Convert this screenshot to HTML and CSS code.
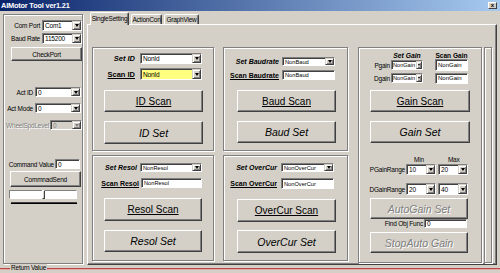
FILE: index.html
```html
<!DOCTYPE html>
<html>
<head>
<meta charset="utf-8">
<title>AIMotor Tool</title>
<link rel="stylesheet" href="styles.css">
</head>
<body>
<div class="window">
  <div class="titlebar">
    <span class="title">AIMotor Tool ver1.21</span>
    <span class="close">x</span>
  </div>
  <div class="main">
    <div class="leftpanel">
      <div class="lp-row lp-com"><span class="lbl">Com Port</span><div class="field combo c40"><span class="val">Com1</span><span class="dd"></span></div></div>
      <div class="lp-row lp-baud"><span class="lbl">Baud Rate</span><div class="field combo c40"><span class="val">115200</span><span class="dd"></span></div></div>
      <div class="btn checkport">CheckPort</div>
      <div class="lp-row lp-actid"><span class="lbl">Act ID</span><div class="field combo c46"><span class="val">0</span><span class="dd"></span></div></div>
      <div class="lp-row lp-actmode"><span class="lbl">Act Mode</span><div class="field combo c46"><span class="val">0</span><span class="dd"></span></div></div>
      <div class="lp-row lp-wheel"><span class="lbl disabled">WheelSpdLevel</span><div class="field combo c32 dis"><span class="val">0</span><span class="dd"></span></div></div>
      <div class="lp-row lp-cmd"><span class="lbl">Command Value</span><div class="field c25"><span class="val">0</span></div></div>
      <div class="btn cmdsend">CommnadSend</div>
      <div class="track">
        <div class="track-boxes"><div class="tbox tb1"></div><div class="thumb"></div><div class="tbox tb2"></div></div>
        <div class="track-line"></div>
      </div>
    </div>
    <div class="tabctl">
      <div class="tabs">
        <div class="tab sel">SingleSetting</div>
        <div class="tab t2">ActionCon</div>
        <div class="tab t3">GraphView</div>
      </div>
      <div class="tabpage">
        <div class="col col1">
          <div class="grp g-id">
            <div class="frow r1"><span class="flbl blabel it big">Set ID</span><div class="field combo"><span class="val">NonId</span><span class="dd"></span></div></div>
            <div class="frow r2"><span class="flbl blabel ul big">Scan ID</span><div class="field combo yellow"><span class="val">NonId</span><span class="dd"></span></div></div>
            <div class="btn bigbtn b1"><span class="ul">ID Scan</span></div>
            <div class="btn bigbtn b2"><span class="it">ID Set</span></div>
          </div>
          <div class="grp g-resol">
            <div class="frow r1"><span class="flbl blabel it">Set Resol</span><div class="field combo small"><span class="val">NonResol</span><span class="dd"></span></div></div>
            <div class="frow r2"><span class="flbl blabel ul">Scan Resol</span><div class="field small"><span class="val">NonResol</span></div></div>
            <div class="btn bigbtn b1"><span class="ul">Resol Scan</span></div>
            <div class="btn bigbtn b2"><span class="it">Resol Set</span></div>
          </div>
        </div>
        <div class="col col2">
          <div class="grp g-baud">
            <div class="frow r1"><span class="flbl blabel it">Set Baudrate</span><div class="field combo small"><span class="val">NonBaud</span><span class="dd"></span></div></div>
            <div class="frow r2"><span class="flbl blabel ul">Scan Baudrate</span><div class="field small"><span class="val">NonBaud</span></div></div>
            <div class="btn bigbtn b1"><span class="ul">Baud Scan</span></div>
            <div class="btn bigbtn b2"><span class="it">Baud Set</span></div>
          </div>
          <div class="grp g-oc">
            <div class="frow r1"><span class="flbl blabel it">Set OverCur</span><div class="field combo small"><span class="val">NonOverCur</span><span class="dd"></span></div></div>
            <div class="frow r2"><span class="flbl blabel ul">Scan OverCur</span><div class="field small"><span class="val">NonOverCur</span></div></div>
            <div class="btn bigbtn b1"><span class="ul">OverCur Scan</span></div>
            <div class="btn bigbtn b2"><span class="it">OverCur Set</span></div>
          </div>
        </div>
        <div class="grp g-gain">
          <div class="ghead"><span class="blabel it gh1">Set Gain</span><span class="blabel ul gh2">Scan Gain</span></div>
          <div class="frow grow1"><span class="flbl">Pgain</span><div class="field combo gc"><span class="val">NonGain</span><span class="dd"></span></div><div class="field gt"><span class="val">NonGain</span></div></div>
          <div class="frow grow2"><span class="flbl">Dgain</span><div class="field combo gc"><span class="val">NonGain</span><span class="dd"></span></div><div class="field gt"><span class="val">NonGain</span></div></div>
          <div class="btn bigbtn b1"><span class="ul">Gain Scan</span></div>
          <div class="btn bigbtn b2"><span class="it">Gain Set</span></div>
          <div class="minmax"><span class="mn">Min</span><span class="mx">Max</span></div>
          <div class="frow rng1"><span class="flbl">PGainRange</span><div class="field combo rc"><span class="val">10</span><span class="dd"></span></div><div class="field combo rc"><span class="val">20</span><span class="dd"></span></div></div>
          <div class="frow rng2"><span class="flbl">DGainRange</span><div class="field combo rc"><span class="val">20</span><span class="dd"></span></div><div class="field combo rc"><span class="val">40</span><span class="dd"></span></div></div>
          <div class="btn bigbtn b3 dbtn"><span class="it">AutoGain Set</span></div>
          <div class="frow frow-find"><span class="flbl">Find Obj Func</span><div class="field ft"><span class="val">0</span></div></div>
          <div class="btn bigbtn b4 dbtn"><span class="it">StopAuto Gain</span></div>
        </div>
        <div class="grp strip"></div>
      </div>
    </div>
  </div>
  <div class="retval"><span class="rv-label">Return Value</span></div>
</div>
</body>
</html>
```

FILE: styles.css
```css
* { box-sizing: border-box; margin: 0; padding: 0; }
body {
  margin: 0;
  background: #d4d0c8;
  font-family: "Liberation Sans", Arial, sans-serif;
  font-size: 6.5px;
  letter-spacing: -0.2px;
  color: #000;
}
.window { width: 500px; height: 273px; overflow: hidden; background: #d4d0c8; }

/* title bar */
.titlebar {
  height: 11px;
  background: linear-gradient(to right, #0a246a, #a6caf0);
  display: flex; align-items: center; justify-content: space-between;
  padding: 0 3px 0 1px;
}
.title { color: #fff; font-weight: bold; font-size: 7.4px; letter-spacing: -0.2px; line-height: 11px; }
.close {
  width: 9px; height: 7px; background: #d4d0c8;
  border: 1px solid; border-color: #fff #404040 #404040 #fff;
  font: bold 6px/4px "Liberation Sans", Arial, sans-serif; letter-spacing: 0; text-align: center;
}

.main { display: flex; height: 254px; }

/* generic widgets */
.btn {
  background: #d4d0c8;
  border: 1px solid; border-color: #fff #404040 #404040 #fff;
  box-shadow: inset -1px -1px #808080;
  display: flex; align-items: center; justify-content: center;
  white-space: nowrap;
}
.field {
  background: #fff;
  border: 1px solid; border-color: #808080 #fff #fff #808080;
  box-shadow: inset 1px 1px #404040;
  display: flex; align-items: stretch;
  height: 100%;
}
.field .val { flex: 1; display: flex; align-items: center; padding-left: 2px; white-space: nowrap; overflow: hidden; }
.dd {
  width: 9px; flex: none;
  background: #d4d0c8;
  border: 1px solid; border-color: #d4d0c8 #404040 #404040 #d4d0c8;
  box-shadow: inset 1px 1px #fff, inset -1px -1px #808080;
  display: flex; align-items: center; justify-content: center;
}
.dd::after {
  content: ""; width: 0; height: 0;
  border-left: 2px solid transparent; border-right: 2px solid transparent;
  border-top: 3px solid #000;
}
.yellow { background: #ffff80; }
.dis { background: #d4d0c8; color: #808080; }
.dis .dd::after { border-top-color: #808080; }
.disabled { color: #808080; text-shadow: 1px 1px #fff; }

.grp {
  border: 1px solid #808080;
  box-shadow: inset 1px 1px #fff, 1px 1px #fff;
  display: flex; flex-direction: column;
}

/* left panel */
.leftpanel {
  margin: 3px 0 0 3px; width: 80px; height: 250px;
  border: 1px solid #808080;
  box-shadow: inset 1px 1px #fff, 1px 1px #fff;
  display: flex; flex-direction: column;
}
.lp-row { display: flex; align-items: center; justify-content: flex-end; }
.lp-row .field { height: 100%; }
.lp-row .lbl { white-space: nowrap; margin-right: 2px; }
.c40 { width: 40px; }
.c46 { width: 46px; }
.c32 { width: 32px; }
.c25 { width: 25px; }
.lp-com { margin-top: 5px; height: 11px; }
.lp-baud { margin-top: 2px; height: 11px; }
.checkport { margin: 3px 0 0 7px; width: 71px; height: 14px; }
.lp-actid { margin-top: 26px; height: 10px; padding-right: 1px; }
.lp-actmode { margin-top: 6px; height: 10px; padding-right: 1px; }
.lp-wheel { margin-top: 7px; height: 10px; }
.lp-wheel .lbl { margin-right: 1px; }
.lp-cmd { margin-top: 29px; height: 10px; padding-right: 2px; }
.lp-cmd .lbl { margin-right: 1px; }
.cmdsend { margin: 2px 0 0 6px; width: 71px; height: 16px; }
.track { margin: 3px 0 0 5px; width: 70px; }
.track-boxes { display: flex; height: 9px; align-items: stretch; }
.tbox {
  background: #fff;
  border: 1px solid; border-color: #808080 #fff #fff #808080;
}
.tb1 { width: 34px; }
.tb2 { width: 33px; }
.thumb {
  width: 3px; margin: 0 -1px; position: relative; z-index: 1;
  background: #d4d0c8; border: 1px solid; border-color: #fff #404040 #404040 #fff;
}
.track-line { margin: 3px 0 0 2px; width: 66px; height: 2px; background: #000; border-top: 1px solid #404040; }

/* tabs */
.tabctl { margin-left: 4px; width: 410px; display: flex; flex-direction: column; }
.tabs { height: 13px; display: flex; align-items: flex-end; padding-left: 3px; position: relative; z-index: 1; }
.tab {
  height: 10px; background: #d4d0c8;
  border: 1px solid; border-bottom: none;
  border-color: #fff #404040 transparent #fff;
  border-radius: 2px 2px 0 0;
  box-shadow: inset -1px 0 #808080;
  display: flex; align-items: center; justify-content: center;
  white-space: nowrap;
}
.tab.sel { height: 13px; width: 39px; margin-bottom: -1px; padding-bottom: 2px; }
.t2 { width: 31px; margin-left: 2px; }
.t3 { width: 35px; margin-left: 2px; }
.tabpage {
  height: 241px;
  border: 1px solid; border-color: #fff #404040 #404040 #fff;
  box-shadow: inset -1px -1px #808080;
  padding: 22px 0 0 4px;
  display: flex; align-items: flex-start;
}
.col { display: flex; flex-direction: column; gap: 4px; }
.col1 { width: 122px; margin-right: 9px; }
.col2 { width: 125px; margin-right: 10px; }

/* group rows */
.frow { display: flex; align-items: center; }
.flbl { text-align: right; white-space: nowrap; flex: none; }
.blabel { font-weight: bold; font-size: 7px; letter-spacing: 0; }
.blabel.big { font-size: 7.5px; }
.it { font-style: italic; }
.ul { text-decoration: underline; }
.bigbtn { font-size: 10.5px; letter-spacing: 0; }
.bigbtn .ul { font-size: 10px; }
.small { font-size: 5.7px; letter-spacing: 0; }

.g-id { height: 104px; padding-top: 5px; }
.g-id .r1 { height: 11px; }
.g-id .r2 { height: 12px; margin-top: 4px; }
.g-id .flbl { width: 42px; margin-right: 5px; }
.g-id .field { width: 62px; }
.g-id .b1 { margin: 10px 0 0 11px; width: 99px; height: 22px; }
.g-id .b2 { margin: 9px 0 0 11px; width: 99px; height: 23px; }

.g-resol { height: 106px; padding-top: 7px; }
.g-resol .r1 { height: 9px; }
.g-resol .r1 .flbl { width: 44px; margin-right: 3px; }
.g-resol .r1 .field { width: 62px; }
.g-resol .r2 { height: 10px; margin-top: 6px; }
.g-resol .r2 .flbl { width: 46px; margin-right: 2px; }
.g-resol .r2 .field { width: 61px; }
.g-resol .b1 { margin: 10px 0 0 11px; width: 98px; height: 23px; }
.g-resol .b2 { margin: 9px 0 0 11px; width: 98px; height: 22px; }

.g-baud { height: 104px; padding-top: 9px; }
.g-baud .r1 { height: 9px; }
.g-baud .r2 { height: 10px; margin-top: 4px; }
.g-baud .flbl { width: 55px; margin-right: 3px; }
.g-baud .field { width: 53px; }
.g-baud .b1 { margin: 10px 0 0 13px; width: 99px; height: 22px; }
.g-baud .b2 { margin: 9px 0 0 13px; width: 99px; height: 22px; }

.g-oc { height: 106px; padding-top: 7px; }
.g-oc .r1 { height: 9px; }
.g-oc .r2 { height: 11px; margin-top: 6px; }
.g-oc .flbl { width: 53px; margin-right: 4px; }
.g-oc .field { width: 53px; }
.g-oc .b1 { margin: 10px 0 0 13px; width: 99px; height: 23px; }
.g-oc .b2 { margin: 8px 0 0 13px; width: 99px; height: 23px; }

.g-gain { width: 124px; height: 216px; padding-top: 4px; }
.ghead { display: flex; height: 7px; align-items: center; margin-left: 32px; }
.gh1 { width: 32px; text-align: center; white-space: nowrap; font-size: 6.8px; }
.gh2 { width: 33px; margin-left: 12px; text-align: center; white-space: nowrap; font-size: 6.6px; display: flex; justify-content: center; }
.grow1 { height: 12px; }
.grow2 { height: 12px; margin-top: 1px; }
.grow1 .flbl, .grow2 .flbl { width: 31px; margin-right: 1px; }
.gc { width: 32px; height: 10px; margin-right: 12px; font-size: 5.6px; letter-spacing: 0; }
.gc .val { padding-left: 1px; }
.gc .dd { width: 6px; }
.gc .dd::after { border-left-width: 1.5px; border-right-width: 1.5px; border-top-width: 2px; }
.gt { width: 33px; height: 12px; font-size: 6px; letter-spacing: 0; }
.grow2 .gt { height: 11px; }
.g-gain .b1 { margin: 6px 0 0 11px; width: 100px; height: 22px; }
.g-gain .b2 { margin: 9px 0 0 11px; width: 100px; height: 22px; }
.minmax { display: flex; height: 8px; align-items: center; margin-top: 12px; }
.mn { margin-left: 55px; }
.mx { margin-left: 24px; }
.rng1 { height: 11px; margin-top: 1px; }
.rng2 { height: 12px; margin-top: 8px; }
.rng1 .flbl, .rng2 .flbl { width: 46px; margin-right: 1px; }
.rc { width: 30px; margin-right: 2px; }
.g-gain .b3 { margin: 3px 0 0 11px; width: 98px; height: 21px; }
.frow-find { height: 9px; }
.frow-find .flbl { width: 64px; margin-right: 1px; }
.ft { width: 43px; }
.g-gain .b4 { margin: 4px 0 0 11px; width: 98px; height: 21px; }
.dbtn { color: #808080; text-shadow: 1px 1px #fff; }

.strip { margin-left: 2px; width: 8px; height: 216px; }

/* return value group */
.retval {
  margin-top: 3px; height: 5px;
  border-top: 1px solid #b84848;
  box-shadow: inset 0 1px #e8a8a8;
  display: flex;
}
.rv-label {
  margin: -5px 0 0 10px; height: 8px; line-height: 8px;
  padding: 0 1px; background: #d4d0c8;
}
```
